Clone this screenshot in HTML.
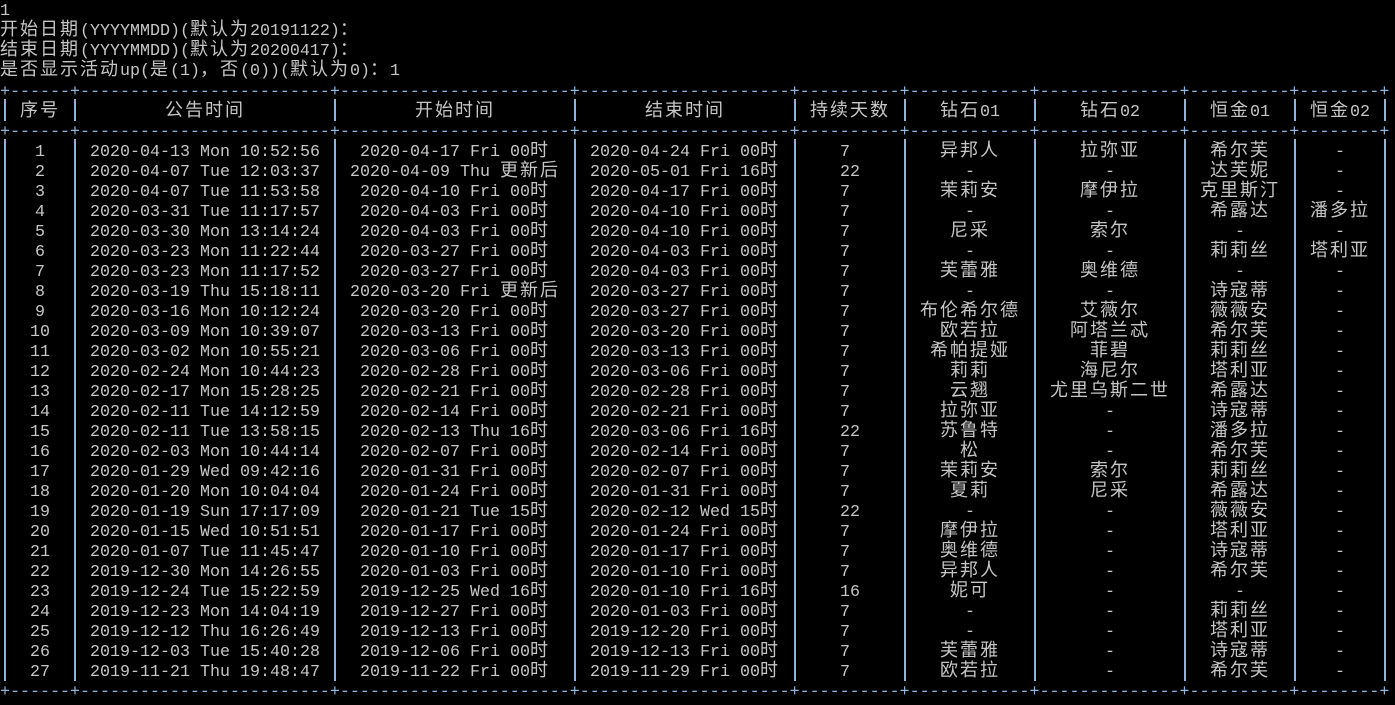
<!DOCTYPE html>
<html><head><meta charset="utf-8"><style>
body{margin:0;background:#000;width:1395px;height:698px;overflow:hidden;position:relative;color:#c6c6c6;font:16.67px/20px "Liberation Mono","Noto Sans CJK SC",monospace;}
b{font-weight:normal;font-family:"Noto Sans CJK SC",sans-serif;font-size:18px;letter-spacing:2px;line-height:0}
.l{position:absolute;left:0;height:22px;white-space:pre;margin-top:2px}
.h{position:absolute;left:0;height:22px;white-space:pre;color:#8fb3d9;margin-top:3px}
.r{position:absolute;left:0;width:1395px;height:26px;overflow:hidden}
.r span{position:absolute;top:3px;text-align:center;white-space:pre}
.c1{left:5px;width:70px}.c2{left:75px;width:260px}.c3{left:335px;width:240px}.c4{left:575px;width:220px}
.r .c5{left:840px;width:70px;text-align:left}.c6{left:905px;width:130px}.c7{left:1035px;width:150px}.c8{left:1185px;width:110px}.c9{left:1295px;width:90px}
.hd .c5{left:795px;width:110px;text-align:center}
.v{position:absolute;width:2px;background:#8fb3d9}
</style></head><body>
<div class="l" style="top:0">1</div>
<div class="l" style="top:20px"><b>开始日期</b>(YYYYMMDD)(<b>默认为</b>20191122)<b>：</b></div>
<div class="l" style="top:40px"><b>结束日期</b>(YYYYMMDD)(<b>默认为</b>20200417)<b>：</b></div>
<div class="l" style="top:60px"><b>是否显示活动</b>up(<b>是</b>(1)<b>，否</b>(0))(<b>默认为</b>0)<b>：</b>1</div>
<div class="h" style="top:80px">+------+-------------------------+-----------------------+---------------------+----------+------------+--------------+----------+--------+</div>
<div class="h" style="top:120px">+------+-------------------------+-----------------------+---------------------+----------+------------+--------------+----------+--------+</div>
<div class="h" style="top:680px">+------+-------------------------+-----------------------+---------------------+----------+------------+--------------+----------+--------+</div>

<div class="v" style="left:4px;top:99px;height:22px"></div><div class="v" style="left:74px;top:99px;height:22px"></div><div class="v" style="left:334px;top:99px;height:22px"></div><div class="v" style="left:574px;top:99px;height:22px"></div><div class="v" style="left:794px;top:99px;height:22px"></div><div class="v" style="left:904px;top:99px;height:22px"></div><div class="v" style="left:1034px;top:99px;height:22px"></div><div class="v" style="left:1184px;top:99px;height:22px"></div><div class="v" style="left:1294px;top:99px;height:22px"></div><div class="v" style="left:1384px;top:99px;height:22px"></div>
<div class="v" style="left:4px;top:139px;height:542px"></div><div class="v" style="left:74px;top:139px;height:542px"></div><div class="v" style="left:334px;top:139px;height:542px"></div><div class="v" style="left:574px;top:139px;height:542px"></div><div class="v" style="left:794px;top:139px;height:542px"></div><div class="v" style="left:904px;top:139px;height:542px"></div><div class="v" style="left:1034px;top:139px;height:542px"></div><div class="v" style="left:1184px;top:139px;height:542px"></div><div class="v" style="left:1294px;top:139px;height:542px"></div><div class="v" style="left:1384px;top:139px;height:542px"></div>

<div class="r hd" style="top:100px"><span class="c1"><b>序号</b></span><span class="c2"><b>公告时间</b></span><span class="c3"><b>开始时间</b></span><span class="c4"><b>结束时间</b></span><span class="c5"><b>持续天数</b></span><span class="c6"><b>钻石</b>01</span><span class="c7"><b>钻石</b>02</span><span class="c8"><b>恒金</b>01</span><span class="c9"><b>恒金</b>02</span></div>

<div class="r" style="top:140px"><span class="c1">1</span><span class="c2">2020-04-13 Mon 10:52:56</span><span class="c3">2020-04-17 Fri 00<b>时</b></span><span class="c4">2020-04-24 Fri 00<b>时</b></span><span class="c5">7</span><span class="c6"><b>异邦人</b></span><span class="c7"><b>拉弥亚</b></span><span class="c8"><b>希尔芙</b></span><span class="c9">-</span></div>
<div class="r" style="top:160px"><span class="c1">2</span><span class="c2">2020-04-07 Tue 12:03:37</span><span class="c3">2020-04-09 Thu <b>更新后</b></span><span class="c4">2020-05-01 Fri 16<b>时</b></span><span class="c5">22</span><span class="c6">-</span><span class="c7">-</span><span class="c8"><b>达芙妮</b></span><span class="c9">-</span></div>
<div class="r" style="top:180px"><span class="c1">3</span><span class="c2">2020-04-07 Tue 11:53:58</span><span class="c3">2020-04-10 Fri 00<b>时</b></span><span class="c4">2020-04-17 Fri 00<b>时</b></span><span class="c5">7</span><span class="c6"><b>茉莉安</b></span><span class="c7"><b>摩伊拉</b></span><span class="c8"><b>克里斯汀</b></span><span class="c9">-</span></div>
<div class="r" style="top:200px"><span class="c1">4</span><span class="c2">2020-03-31 Tue 11:17:57</span><span class="c3">2020-04-03 Fri 00<b>时</b></span><span class="c4">2020-04-10 Fri 00<b>时</b></span><span class="c5">7</span><span class="c6">-</span><span class="c7">-</span><span class="c8"><b>希露达</b></span><span class="c9"><b>潘多拉</b></span></div>
<div class="r" style="top:220px"><span class="c1">5</span><span class="c2">2020-03-30 Mon 13:14:24</span><span class="c3">2020-04-03 Fri 00<b>时</b></span><span class="c4">2020-04-10 Fri 00<b>时</b></span><span class="c5">7</span><span class="c6"><b>尼采</b></span><span class="c7"><b>索尔</b></span><span class="c8">-</span><span class="c9">-</span></div>
<div class="r" style="top:240px"><span class="c1">6</span><span class="c2">2020-03-23 Mon 11:22:44</span><span class="c3">2020-03-27 Fri 00<b>时</b></span><span class="c4">2020-04-03 Fri 00<b>时</b></span><span class="c5">7</span><span class="c6">-</span><span class="c7">-</span><span class="c8"><b>莉莉丝</b></span><span class="c9"><b>塔利亚</b></span></div>
<div class="r" style="top:260px"><span class="c1">7</span><span class="c2">2020-03-23 Mon 11:17:52</span><span class="c3">2020-03-27 Fri 00<b>时</b></span><span class="c4">2020-04-03 Fri 00<b>时</b></span><span class="c5">7</span><span class="c6"><b>芙蕾雅</b></span><span class="c7"><b>奥维德</b></span><span class="c8">-</span><span class="c9">-</span></div>
<div class="r" style="top:280px"><span class="c1">8</span><span class="c2">2020-03-19 Thu 15:18:11</span><span class="c3">2020-03-20 Fri <b>更新后</b></span><span class="c4">2020-03-27 Fri 00<b>时</b></span><span class="c5">7</span><span class="c6">-</span><span class="c7">-</span><span class="c8"><b>诗寇蒂</b></span><span class="c9">-</span></div>
<div class="r" style="top:300px"><span class="c1">9</span><span class="c2">2020-03-16 Mon 10:12:24</span><span class="c3">2020-03-20 Fri 00<b>时</b></span><span class="c4">2020-03-27 Fri 00<b>时</b></span><span class="c5">7</span><span class="c6"><b>布伦希尔德</b></span><span class="c7"><b>艾薇尔</b></span><span class="c8"><b>薇薇安</b></span><span class="c9">-</span></div>
<div class="r" style="top:320px"><span class="c1">10</span><span class="c2">2020-03-09 Mon 10:39:07</span><span class="c3">2020-03-13 Fri 00<b>时</b></span><span class="c4">2020-03-20 Fri 00<b>时</b></span><span class="c5">7</span><span class="c6"><b>欧若拉</b></span><span class="c7"><b>阿塔兰忒</b></span><span class="c8"><b>希尔芙</b></span><span class="c9">-</span></div>
<div class="r" style="top:340px"><span class="c1">11</span><span class="c2">2020-03-02 Mon 10:55:21</span><span class="c3">2020-03-06 Fri 00<b>时</b></span><span class="c4">2020-03-13 Fri 00<b>时</b></span><span class="c5">7</span><span class="c6"><b>希帕提娅</b></span><span class="c7"><b>菲碧</b></span><span class="c8"><b>莉莉丝</b></span><span class="c9">-</span></div>
<div class="r" style="top:360px"><span class="c1">12</span><span class="c2">2020-02-24 Mon 10:44:23</span><span class="c3">2020-02-28 Fri 00<b>时</b></span><span class="c4">2020-03-06 Fri 00<b>时</b></span><span class="c5">7</span><span class="c6"><b>莉莉</b></span><span class="c7"><b>海尼尔</b></span><span class="c8"><b>塔利亚</b></span><span class="c9">-</span></div>
<div class="r" style="top:380px"><span class="c1">13</span><span class="c2">2020-02-17 Mon 15:28:25</span><span class="c3">2020-02-21 Fri 00<b>时</b></span><span class="c4">2020-02-28 Fri 00<b>时</b></span><span class="c5">7</span><span class="c6"><b>云翘</b></span><span class="c7"><b>尤里乌斯二世</b></span><span class="c8"><b>希露达</b></span><span class="c9">-</span></div>
<div class="r" style="top:400px"><span class="c1">14</span><span class="c2">2020-02-11 Tue 14:12:59</span><span class="c3">2020-02-14 Fri 00<b>时</b></span><span class="c4">2020-02-21 Fri 00<b>时</b></span><span class="c5">7</span><span class="c6"><b>拉弥亚</b></span><span class="c7">-</span><span class="c8"><b>诗寇蒂</b></span><span class="c9">-</span></div>
<div class="r" style="top:420px"><span class="c1">15</span><span class="c2">2020-02-11 Tue 13:58:15</span><span class="c3">2020-02-13 Thu 16<b>时</b></span><span class="c4">2020-03-06 Fri 16<b>时</b></span><span class="c5">22</span><span class="c6"><b>苏鲁特</b></span><span class="c7">-</span><span class="c8"><b>潘多拉</b></span><span class="c9">-</span></div>
<div class="r" style="top:440px"><span class="c1">16</span><span class="c2">2020-02-03 Mon 10:44:14</span><span class="c3">2020-02-07 Fri 00<b>时</b></span><span class="c4">2020-02-14 Fri 00<b>时</b></span><span class="c5">7</span><span class="c6"><b>松</b></span><span class="c7">-</span><span class="c8"><b>希尔芙</b></span><span class="c9">-</span></div>
<div class="r" style="top:460px"><span class="c1">17</span><span class="c2">2020-01-29 Wed 09:42:16</span><span class="c3">2020-01-31 Fri 00<b>时</b></span><span class="c4">2020-02-07 Fri 00<b>时</b></span><span class="c5">7</span><span class="c6"><b>茉莉安</b></span><span class="c7"><b>索尔</b></span><span class="c8"><b>莉莉丝</b></span><span class="c9">-</span></div>
<div class="r" style="top:480px"><span class="c1">18</span><span class="c2">2020-01-20 Mon 10:04:04</span><span class="c3">2020-01-24 Fri 00<b>时</b></span><span class="c4">2020-01-31 Fri 00<b>时</b></span><span class="c5">7</span><span class="c6"><b>夏莉</b></span><span class="c7"><b>尼采</b></span><span class="c8"><b>希露达</b></span><span class="c9">-</span></div>
<div class="r" style="top:500px"><span class="c1">19</span><span class="c2">2020-01-19 Sun 17:17:09</span><span class="c3">2020-01-21 Tue 15<b>时</b></span><span class="c4">2020-02-12 Wed 15<b>时</b></span><span class="c5">22</span><span class="c6">-</span><span class="c7">-</span><span class="c8"><b>薇薇安</b></span><span class="c9">-</span></div>
<div class="r" style="top:520px"><span class="c1">20</span><span class="c2">2020-01-15 Wed 10:51:51</span><span class="c3">2020-01-17 Fri 00<b>时</b></span><span class="c4">2020-01-24 Fri 00<b>时</b></span><span class="c5">7</span><span class="c6"><b>摩伊拉</b></span><span class="c7">-</span><span class="c8"><b>塔利亚</b></span><span class="c9">-</span></div>
<div class="r" style="top:540px"><span class="c1">21</span><span class="c2">2020-01-07 Tue 11:45:47</span><span class="c3">2020-01-10 Fri 00<b>时</b></span><span class="c4">2020-01-17 Fri 00<b>时</b></span><span class="c5">7</span><span class="c6"><b>奥维德</b></span><span class="c7">-</span><span class="c8"><b>诗寇蒂</b></span><span class="c9">-</span></div>
<div class="r" style="top:560px"><span class="c1">22</span><span class="c2">2019-12-30 Mon 14:26:55</span><span class="c3">2020-01-03 Fri 00<b>时</b></span><span class="c4">2020-01-10 Fri 00<b>时</b></span><span class="c5">7</span><span class="c6"><b>异邦人</b></span><span class="c7">-</span><span class="c8"><b>希尔芙</b></span><span class="c9">-</span></div>
<div class="r" style="top:580px"><span class="c1">23</span><span class="c2">2019-12-24 Tue 15:22:59</span><span class="c3">2019-12-25 Wed 16<b>时</b></span><span class="c4">2020-01-10 Fri 16<b>时</b></span><span class="c5">16</span><span class="c6"><b>妮可</b></span><span class="c7">-</span><span class="c8">-</span><span class="c9">-</span></div>
<div class="r" style="top:600px"><span class="c1">24</span><span class="c2">2019-12-23 Mon 14:04:19</span><span class="c3">2019-12-27 Fri 00<b>时</b></span><span class="c4">2020-01-03 Fri 00<b>时</b></span><span class="c5">7</span><span class="c6">-</span><span class="c7">-</span><span class="c8"><b>莉莉丝</b></span><span class="c9">-</span></div>
<div class="r" style="top:620px"><span class="c1">25</span><span class="c2">2019-12-12 Thu 16:26:49</span><span class="c3">2019-12-13 Fri 00<b>时</b></span><span class="c4">2019-12-20 Fri 00<b>时</b></span><span class="c5">7</span><span class="c6">-</span><span class="c7">-</span><span class="c8"><b>塔利亚</b></span><span class="c9">-</span></div>
<div class="r" style="top:640px"><span class="c1">26</span><span class="c2">2019-12-03 Tue 15:40:28</span><span class="c3">2019-12-06 Fri 00<b>时</b></span><span class="c4">2019-12-13 Fri 00<b>时</b></span><span class="c5">7</span><span class="c6"><b>芙蕾雅</b></span><span class="c7">-</span><span class="c8"><b>诗寇蒂</b></span><span class="c9">-</span></div>
<div class="r" style="top:660px"><span class="c1">27</span><span class="c2">2019-11-21 Thu 19:48:47</span><span class="c3">2019-11-22 Fri 00<b>时</b></span><span class="c4">2019-11-29 Fri 00<b>时</b></span><span class="c5">7</span><span class="c6"><b>欧若拉</b></span><span class="c7">-</span><span class="c8"><b>希尔芙</b></span><span class="c9">-</span></div>
</body></html>
